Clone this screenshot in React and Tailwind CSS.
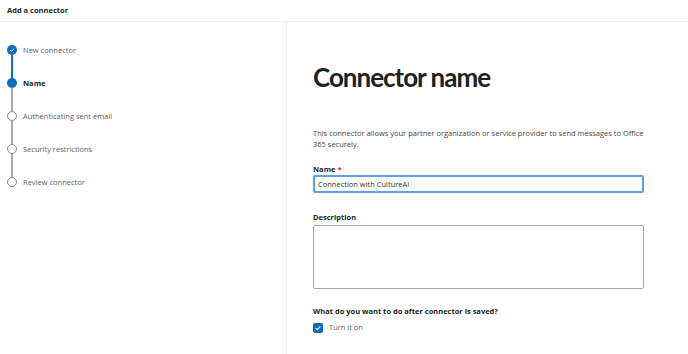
import React, { useState } from 'react';

const steps = [
  { label: 'New connector', state: 'done' },
  { label: 'Name', state: 'current' },
  { label: 'Authenticating sent email', state: 'todo' },
  { label: 'Security restrictions', state: 'todo' },
  { label: 'Review connector', state: 'todo' },
];

function StepDot({ state }) {
  if (state === 'done') {
    return (
      <div className="w-[10px] h-[10px] rounded-full bg-[#0f6cbd] flex items-center justify-center">
        <svg width="6" height="6" viewBox="0 0 10 10">
          <path d="M2 5.2l2 2L8 3" stroke="white" strokeWidth="1.6" fill="none" />
        </svg>
      </div>
    );
  }
  if (state === 'current') {
    return <div className="w-[10px] h-[10px] rounded-full bg-[#0f6cbd]" />;
  }
  return <div className="w-[10px] h-[10px] rounded-full border border-[#8a8a8a] bg-white" />;
}

export default function App() {
  const [name, setName] = useState('Connection with CultureAI');
  const [turnOn, setTurnOn] = useState(true);

  return (
    <div className="w-[688px] h-[354px] bg-white overflow-hidden font-['Open_Sans',sans-serif] text-[#323130]">
      {/* Header */}
      <div className="h-[22px] border-b border-[#f0f0f0] flex items-center pl-[7px]">
        <span className="text-[7.5px] font-bold text-[#201f1e]">Add a connector</span>
      </div>

      <div className="flex h-[332px]">
        {/* Steps */}
        <div className="w-[287px] border-r border-[#f0f0f0] pt-[23px] pl-[7px]">
          {steps.map((step, i) => (
            <div key={step.label} className="flex">
              <div className="flex flex-col items-center w-[10px]">
                <StepDot state={step.state} />
                {i < steps.length - 1 && (
                  <div
                    className={`w-[1.5px] h-[23px] ${step.state === 'done' ? 'bg-[#0f6cbd]' : 'bg-[#a8a8a8]'}`}
                  />
                )}
              </div>
              <span
                className={`ml-[6px] text-[7.5px] leading-[10px] ${
                  step.state === 'current' ? 'font-bold text-[#201f1e]' : 'text-[#605e5c]'
                }`}
              >
                {step.label}
              </span>
            </div>
          ))}
        </div>

        {/* Form */}
        <div className="flex-1 pl-[26px] pt-[38px]">
          <h1 className="font-['Lato',sans-serif] text-[26px] leading-[34px] font-bold tracking-[-1px] text-[#201f1e]">
            Connector name
          </h1>

          <p className="mt-[34px] w-[335px] text-[7.5px] leading-[11px] text-[#484644]">
            This connector allows your partner organization or service provider to send messages to Office 365 securely.
          </p>

          <label className="block mt-[14px] text-[7.5px] font-bold text-[#201f1e] leading-[10px]">
            Name <span className="text-[#c4314b]">*</span>
          </label>
          <input
            value={name}
            onChange={(e) => setName(e.target.value)}
            className="mt-[1px] block w-[331px] h-[18px] border-2 border-[#5ea0e0] rounded-[2px] px-[3px] text-[7.5px] text-[#323130] outline-none"
          />

          <label className="block mt-[19px] text-[7.5px] font-bold text-[#201f1e] leading-[10px]">Description</label>
          <textarea className="mt-[3px] block w-[331px] h-[64px] border border-[#a8a8a8] rounded-[2px] resize-none outline-none" />

          <div className="mt-[17px] text-[7.5px] font-bold text-[#201f1e] leading-[10px]">
            What do you want to do after connector is saved?
          </div>
          <label className="mt-[6px] flex items-center gap-[6px]">
            <button
              type="button"
              onClick={() => setTurnOn(!turnOn)}
              className={`w-[10px] h-[10px] rounded-[2px] flex items-center justify-center ${
                turnOn ? 'bg-[#0f6cbd]' : 'border border-[#8a8a8a]'
              }`}
            >
              {turnOn && (
                <svg width="8" height="8" viewBox="0 0 10 10">
                  <path d="M2 5.2l2 2L8 3" stroke="white" strokeWidth="1.4" fill="none" />
                </svg>
              )}
            </button>
            <span className="text-[7.5px] text-[#605e5c]">Turn it on</span>
          </label>
        </div>
      </div>
    </div>
  );
}
